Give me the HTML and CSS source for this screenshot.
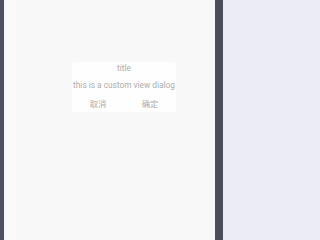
FILE: index.html
```html
<!DOCTYPE html>
<html>
<head>
<meta charset="utf-8">
<link rel="stylesheet" href="styles.css">
</head>
<body>
<div class="frame">
  <div class="edge-left"></div>
  <div class="screen">
    <div class="dialog">
      <div class="title">title</div>
      <div class="message">this is a custom view dialog</div>
      <div class="buttons">
        <div class="btn">取消</div>
        <div class="btn">确定</div>
      </div>
    </div>
  </div>
  <div class="edge-right"></div>
  <div class="outside"></div>
</div>
</body>
</html>
```

FILE: styles.css
```css
html, body {
  margin: 0;
  padding: 0;
  background: #ebecf4;
}
.frame {
  display: flex;
  min-width: 238px;
  min-height: 210px;
  height: 100vh;
}
.edge-left {
  width: 4px;
  background: #4f5064;
}
.screen {
  width: 211px;
  background: linear-gradient(to right, #f6f6f8 0px, #fafafb 4px, #fafafb 11px, #f8f8f9 14px, #f8f8f9 100%);
  padding: 62px 0 0 68px;
  box-sizing: border-box;
}
.edge-right {
  width: 8px;
  background: #4b4e5a;
}
.outside {
  flex: 1;
  background: #ebecf4;
}
.dialog {
  width: 104px;
  height: 50px;
  box-sizing: border-box;
  background: #fefefe;
  border-radius: 3px;
  padding-top: 1px;
  font-family: Roboto, "Noto Sans CJK SC", sans-serif;
  font-size: 8.3px;
  color: #adadad;
  text-align: center;
  display: flex;
  flex-direction: column;
}
.title {
  line-height: 10px;
}
.message {
  line-height: 10px;
  margin-top: 7px;
  white-space: nowrap;
}
.buttons {
  display: flex;
  margin-top: 9px;
  line-height: 10px;
}
.btn {
  flex: 1;
}
```
